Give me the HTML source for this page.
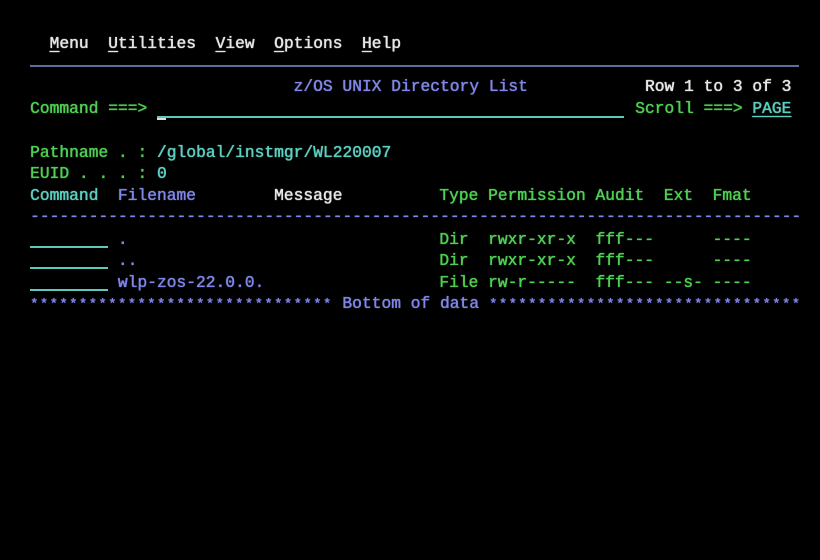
<!DOCTYPE html>
<html><head><meta charset="utf-8"><style>
html,body{margin:0;padding:0;background:#000;width:820px;height:560px;overflow:hidden}
body{position:relative;font-family:"Liberation Mono","DejaVu Sans Mono",monospace;font-size:16.27px;}
.t{position:absolute;line-height:22px;white-space:pre;height:22px;text-shadow:0 0 1px currentColor,0.3px 0 0 currentColor}
.g{color:#4ecf52}.c{color:#5ccfc0}.b{color:#7f86e6}.w{color:#e6e6e6}
.u{text-decoration:underline;text-underline-offset:3px}
.ln{position:absolute;height:2px;background:#5cc9bb}
.st{font-size:14px;letter-spacing:1.36px}
</style></head><body>
<div class="t w" style="left:49.5px;top:33px"><span class="u">M</span>enu  <span class="u">U</span>tilities  <span class="u">V</span>iew  <span class="u">O</span>ptions  <span class="u">H</span>elp</div>
<div style="position:absolute;left:30px;top:65px;width:769px;height:2px;background:#5f6d9e"></div>
<div class="t b" style="left:293.5px;top:76px">z/OS UNIX Directory List</div>
<div class="t w" style="left:644.9px;top:76px">Row 1 to 3 of 3</div>
<div class="t g" style="left:30px;top:98px">Command ===&gt;</div>
<div class="ln" style="left:157px;top:116px;width:467px"></div>
<div style="position:absolute;left:157px;top:118px;width:9px;height:2px;background:#ddd"></div>
<div class="t g" style="left:635.1px;top:98px">Scroll ===&gt;</div>
<div class="t c u" style="left:752.2px;top:98px">PAGE</div>
<div class="t g" style="left:30px;top:142px">Pathname . : <span class="c">/global/instmgr/WL220007</span></div>
<div class="t g" style="left:30px;top:163px">EUID . . . : <span class="c">0</span></div>
<div class="t c" style="left:30px;top:185px">Command</div>
<div class="t b" style="left:117.8px;top:185px">Filename</div>
<div class="t w" style="left:274px;top:185px">Message</div>
<div class="t g" style="left:439.2px;top:185px">Type Permission Audit  Ext  Fmat</div>
<div class="t b" style="left:30px;top:206px">-------------------------------------------------------------------------------</div>
<div class="ln" style="left:30px;top:246px;width:78px"></div>
<div class="ln" style="left:30px;top:267px;width:78px"></div>
<div class="ln" style="left:30px;top:289px;width:78px"></div>
<div class="t b" style="left:117.8px;top:229px">.</div>
<div class="t b" style="left:117.8px;top:250px">..</div>
<div class="t b" style="left:117.8px;top:272px">wlp-zos-22.0.0.</div>
<div class="t g" style="left:439.2px;top:229px">Dir  rwxr-xr-x  fff---      ----</div>
<div class="t g" style="left:439.2px;top:250px">Dir  rwxr-xr-x  fff---      ----</div>
<div class="t g" style="left:439.2px;top:272px">File rw-r-----  fff--- --s- ----</div>
<div class="t b st" style="left:30px;top:294px">*******************************</div>
<div class="t b" style="left:342.3px;top:293px">Bottom of data</div>
<div class="t b st" style="left:489px;top:294px">********************************</div>
</body></html>
